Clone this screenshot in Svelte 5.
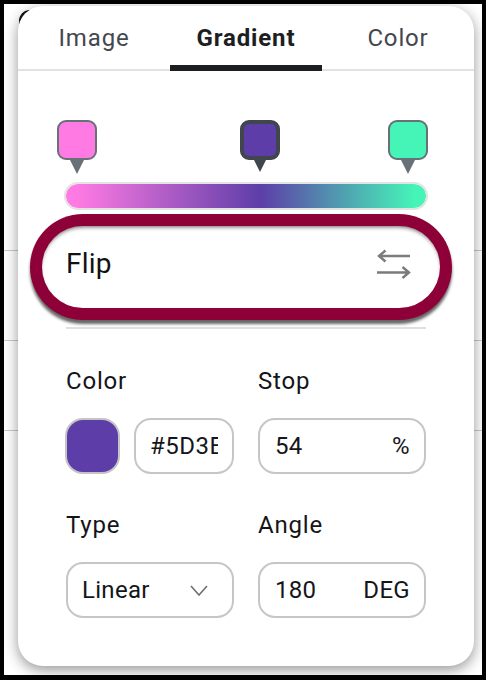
<script>
  const tabs = [
    { label: 'Image', active: false },
    { label: 'Gradient', active: true },
    { label: 'Color', active: false }
  ];
  const stops = [
    { id: 'a', color: '#ff7ae3', left: 57, active: false },
    { id: 'b', color: '#5d3ea8', left: 240, active: true },
    { id: 'c', color: '#45f5b8', left: 388, active: false }
  ];
</script>

<div class="frame">
  <div class="edge"></div>
  <div class="card">
    <nav class="tabs">
      {#each tabs as t}
        <div class="tab" class:active={t.active}>{t.label}</div>
      {/each}
    </nav>

    <div class="stops">
      {#each stops as s}
        <div class="pin" class:on={s.active} style="left:{s.left - 18}px">
          <div class="chip" style="background:{s.color}"></div>
          <div class="tip"></div>
        </div>
      {/each}
    </div>

    <div class="bar"></div>

    <div class="flip">
      <span>Flip</span>
      <svg width="34" height="30" viewBox="0 0 34 30" fill="none" stroke="#7b7b7b" stroke-width="2.4">
        <path d="M33 7H2M8.5 1.5L2 7L8.5 12.5" />
        <path d="M0 23.5H32M25.5 18L32 23.5L25.5 29" />
      </svg>
    </div>

    <div class="rule"></div>

    <div class="grid">
      <div class="col">
        <div class="label">Color</div>
        <div class="pair">
          <div class="swatch"></div>
          <div class="field hex"><span>#5D3E</span></div>
        </div>
      </div>
      <div class="col">
        <div class="label">Stop</div>
        <div class="field between"><span>54</span><span>%</span></div>
      </div>
      <div class="col">
        <div class="label">Type</div>
        <div class="field between select">
          <span>Linear</span>
          <svg width="18" height="11" viewBox="0 0 18 11" fill="none" stroke="#6f6f6f" stroke-width="1.6">
            <path d="M1 1L9 10L17 1" />
          </svg>
        </div>
      </div>
      <div class="col">
        <div class="label">Angle</div>
        <div class="field between"><span>180</span><span>DEG</span></div>
      </div>
    </div>
  </div>
</div>

<style>
  :global(body) {
    margin: 0;
    background: #000;
  }
  .frame {
    box-sizing: border-box;
    width: 486px;
    height: 680px;
    border: solid #000;
    border-width: 4px 4px 5px 4px;
    padding: 2px 8px 9px 14px;
    position: relative;
    overflow: hidden;
    font-family: Roboto, sans-serif;
    color: #16171a;
    background:
      linear-gradient(#c9c9c9, #c9c9c9) 0 246px / 100% 1px no-repeat,
      linear-gradient(#c9c9c9, #c9c9c9) 0 336px / 100% 1px no-repeat,
      linear-gradient(#c9c9c9, #c9c9c9) 0 426px / 100% 1px no-repeat,
      #fff;
  }
  .edge {
    position: absolute;
    left: 15px;
    top: 6px;
    width: 14px;
    height: 14px;
    border: 3px solid #111;
    border-right: 0;
    border-bottom: 0;
    border-top-left-radius: 11px;
  }
  .card {
    position: relative;
    box-sizing: border-box;
    height: 660px;
    background: #fff;
    border-radius: 25px;
    box-shadow: 0 4px 14px rgba(0, 0, 0, 0.42);
  }
  .tabs {
    display: flex;
    height: 65px;
    box-sizing: border-box;
    border-bottom: 2px solid #e2e2e2;
  }
  .tab {
    width: 152px;
    box-sizing: border-box;
    text-align: center;
    font-size: 24px;
    line-height: 65px;
    letter-spacing: 0.85px;
    color: #44474e;
    height: 65px;
  }
  .tab.active {
    font-weight: 700;
    color: #1d1e22;
    border-bottom: 6px solid #1d1e22;
  }
  .stops {
    position: relative;
    height: 112px;
  }
  .pin {
    position: absolute;
    top: 49px;
    width: 40px;
    display: flex;
    flex-direction: column;
    align-items: center;
  }
  .chip {
    box-sizing: border-box;
    width: 40px;
    height: 40px;
    border: 2px solid #687078;
    border-radius: 9px;
  }
  .tip {
    width: 0;
    height: 0;
    border-left: 7px solid transparent;
    border-right: 7px solid transparent;
    border-top: 14px solid #687078;
  }
  .pin.on .chip {
    border: 4px solid #41464e;
  }
  .pin.on .tip {
    border-top-color: #41464e;
    border-left-width: 6.5px;
    border-right-width: 6.5px;
    border-top-width: 12px;
  }
  .bar {
    box-sizing: border-box;
    width: 364px;
    height: 28px;
    margin-left: 46px;
    margin-top: -1px;
    border: 2px solid #e3e3e3;
    border-radius: 14px;
    background: linear-gradient(90deg, #ff7ae3 0%, #ff7ae3 3%, #5d3ea8 54%, #45f5b8 97%, #45f5b8 100%) padding-box;
  }
  .flip {
    display: flex;
    align-items: center;
    justify-content: space-between;
    box-sizing: border-box;
    width: 398px;
    height: 82px;
    margin: 16px 0 0 24px;
    padding: 0 29px 0 25px;
    border-radius: 41px;
    background: #fff;
    font-size: 28px;
    letter-spacing: 0.2px;
    color: #111;
    box-shadow:
      inset 0 3px 4px -2px rgba(0, 0, 0, 0.6),
      0 0 0 12px #8e0038,
      0 4px 3px 12px rgba(0, 0, 0, 0.6);
  }
  .flip span {
    position: relative;
    top: -4px;
    left: -1px;
  }
  .flip svg {
    position: relative;
    top: -3px;
  }
  .rule {
    height: 2px;
    background: #e0e0e0;
    width: 360px;
    margin: 19px 0 0 48px;
  }
  .grid {
    display: grid;
    grid-template-columns: 168px 168px;
    column-gap: 24px;
    row-gap: 37px;
    margin: 38px 0 0 48px;
  }
  .label {
    font-size: 24px;
    line-height: 28px;
    letter-spacing: 0.8px;
    color: #141518;
    margin-bottom: 23px;
  }
  .pair {
    display: flex;
    gap: 14px;
  }
  .swatch {
    box-sizing: border-box;
    width: 55px;
    height: 56px;
    margin-left: -1px;
    border-radius: 18px;
    background: #5d3ea8;
    border: 2px solid #c4c4c4;
  }
  .field {
    box-sizing: border-box;
    height: 56px;
    border: 2px solid #c6c6c6;
    border-radius: 17px;
    padding: 0 14px 0 15px;
    display: flex;
    align-items: center;
    font-size: 24px;
    letter-spacing: 0.3px;
    color: #15161a;
  }
  .between {
    justify-content: space-between;
  }
  .hex {
    width: 100px;
    padding: 0 14px;
  }
  .hex span {
    display: block;
    overflow: hidden;
    white-space: nowrap;
    width: 68px;
    letter-spacing: 0.5px;
  }
  .select {
    padding: 0 24px 0 14px;
  }
</style>
